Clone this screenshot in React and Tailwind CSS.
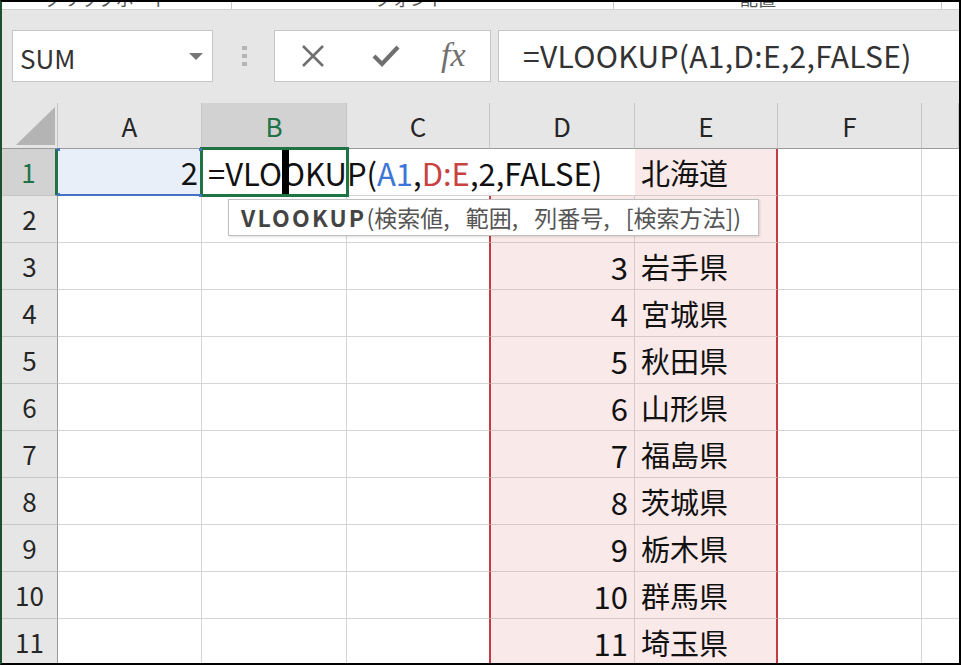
import React from 'react';

const font = { fontFamily: '"Noto Sans CJK JP", "Noto Sans", sans-serif' };

const prefs = ['北海道', '青森県', '岩手県', '宮城県', '秋田県', '山形県', '福島県', '茨城県', '栃木県', '群馬県', '埼玉県'];
const cols = ['A', 'B', 'C', 'D', 'E', 'F', ''];

function Toolbar() {
  return (
    <div className="h-[93px] bg-[#e6e6e6] flex items-start pt-[20px] pl-[10px]">
      {/* name box */}
      <div className="w-[201px] h-[52px] bg-white border border-[#c6c6c6] flex items-center pl-[7px] pr-[9px]">
        <span className="text-[26px] text-[#333] leading-none flex-1 mt-[3px]">SUM</span>
        <svg width="14" height="7" viewBox="0 0 14 7">
          <path d="M0 0 L14 0 L7 7 Z" fill="#777" />
        </svg>
      </div>
      {/* grip dots */}
      <div className="ml-[29px] mt-[16px] flex flex-col gap-[4px]">
        <div className="w-[5px] h-[4px] bg-[#b5b5b5]" />
        <div className="w-[5px] h-[4px] bg-[#b5b5b5]" />
        <div className="w-[5px] h-[4px] bg-[#b5b5b5]" />
      </div>
      {/* cancel / enter / fx */}
      <div className="ml-[27px] w-[217px] h-[52px] bg-white border border-[#c6c6c6] flex items-center">
        <svg className="ml-[26px]" width="24" height="22" viewBox="0 0 24 22">
          <path d="M2 1 L22 21 M22 1 L2 21" stroke="#707070" strokeWidth="2.6" fill="none" />
        </svg>
        <svg className="ml-[47px]" width="28" height="22" viewBox="0 0 28 22">
          <path d="M2 11 L10 19 L26 2" stroke="#707070" strokeWidth="4.2" fill="none" strokeLinejoin="miter" />
        </svg>
        <span
          className="ml-[41px] text-[34px] italic text-[#707070] leading-none -mt-[2px]"
          style={{ fontFamily: '"Liberation Serif", "DejaVu Serif", serif' }}
        >
          fx
        </span>
      </div>
      {/* formula bar */}
      <div className="ml-[7px] -mr-[2px] flex-1 h-[52px] bg-white border border-[#c6c6c6] flex items-center pl-[24px]">
        <span className="text-[30px] text-[#333] leading-none -mt-[3px] tracking-[0.3px]">=VLOOKUP(A1,D:E,2,FALSE)</span>
      </div>
    </div>
  );
}

function Grid() {
  const cells = [];

  // header row
  cells.push(
    <div key="corner" className="bg-[#e6e6e6] border-r border-b border-r-[#c6c6c6] border-b-[#9b9b9b] flex items-end justify-end pr-[2px] pb-[3px]">
      <svg width="39" height="38" viewBox="0 0 39 38">
        <path d="M0 38 L39 38 L39 0 Z" fill="#b4b4b4" />
      </svg>
    </div>
  );
  cols.forEach((c) => {
    const sel = c === 'B';
    cells.push(
      <div
        key={'h' + c}
        className={
          'border-r border-b border-r-[#c6c6c6] border-b-[#9b9b9b] flex items-center justify-center text-[26px] leading-none ' +
          (sel ? 'bg-[#d2d2d2] text-[#217346]' : 'bg-[#e6e6e6] text-[#262626]')
        }
      >
        {c}
      </div>
    );
  });

  for (let r = 1; r <= 11; r++) {
    const active = r === 1;
    cells.push(
      <div
        key={'r' + r}
        className={
          'border-b border-b-[#c6c6c6] flex items-center justify-center text-[26px] leading-none ' +
          (active
            ? 'bg-[#d2d2d2] text-[#217346] border-r-[3px] border-r-[#217346]'
            : 'bg-[#e6e6e6] text-[#262626] border-r border-r-[#9b9b9b]')
        }
      >
        {r}
      </div>
    );

    // A
    if (active) {
      cells.push(
        <div key={'a' + r} className="relative bg-[#e8eff9] border-b-2 border-b-[#4472c4] flex items-center justify-end pr-[4px] text-[31px] text-[#111] leading-none">
          2
          <div className="absolute -left-[1px] -top-[1px] w-[3px] h-[3px] bg-[#4472c4]" />
          <div className="absolute -left-[1px] -bottom-[2px] w-[3px] h-[3px] bg-[#4472c4]" />
        </div>
      );
    } else {
      cells.push(<div key={'a' + r} className="border-r border-b border-[#d4d4d4]" />);
    }

    // B
    if (active) {
      cells.push(
        <div key={'b' + r} className="relative border-r border-b border-[#d4d4d4]">
          <div className="absolute left-0 top-0 w-[433px] h-[46px] bg-white z-10 flex items-center pl-[6px] text-[31px] text-[#111] leading-none whitespace-nowrap">
            <span>=VLO</span>
            <div className="relative self-stretch w-0">
              <div className="absolute left-0 top-0 w-[7px] h-[47px] bg-black" />
            </div>
            <span>OKUP(</span>
            <span className="text-[#3e74d6]">A1</span>
            <span>,</span>
            <span className="text-[#c8423f]">D:E</span>
            <span>,2,FALSE)</span>
          </div>
          <div className="absolute -left-[2px] -top-[2px] w-[149px] h-[50px] border-[3px] border-[#217346] z-20" />
          <div className="absolute -left-[3px] -top-[1px] w-[3px] h-[3px] bg-[#4472c4] z-30" />
          <div className="absolute -left-[3px] -bottom-[2px] w-[3px] h-[3px] bg-[#4472c4] z-30" />
        </div>
      );
    } else {
      cells.push(<div key={'b' + r} className="border-r border-b border-[#d4d4d4]" />);
    }

    // C
    cells.push(
      <div
        key={'c' + r}
        className={'border-b border-b-[#d4d4d4] border-r ' + (active ? 'border-r-[#d4d4d4]' : 'border-r-[#c23b45]')}
      />
    );

    // D
    cells.push(
      <div
        key={'d' + r}
        className={
          'bg-[#f9e9e9] border-r border-b border-[#d6c9c9] flex items-center justify-end pr-[6px] text-[31px] text-[#111] leading-none ' +
          (active ? '' : 'border-l border-l-[#c23b45]')
        }
      >
        {r}
      </div>
    );

    // E
    cells.push(
      <div
        key={'e' + r}
        className="bg-[#f9e9e9] border-b border-b-[#d6c9c9] border-r-2 border-r-[#c23b45] flex items-center pl-[6px] text-[29px] text-[#111] leading-none"
      >
        {prefs[r - 1]}
      </div>
    );

    // F, G
    cells.push(<div key={'f' + r} className="border-r border-b border-[#d4d4d4]" />);
    cells.push(<div key={'g' + r} className="border-b border-[#d4d4d4]" />);
  }

  return (
    <div className="relative">
      <div className="grid grid-cols-[56px_144px_145px_143px_145px_143px_144px_1fr] grid-rows-[46px] auto-rows-[47px]">
        {cells}
      </div>
      {/* function tooltip */}
      <div className="absolute left-[226px] top-[96px] z-40 w-[531px] h-[37px] bg-white border border-[#bfbfbf] shadow-[1px_1px_2px_rgba(0,0,0,0.12)] flex items-center pl-[12px] text-[23px] text-[#555] leading-none whitespace-nowrap">
        <span className="font-bold text-[#444] tracking-[2.2px]">VLOOKUP</span>
        <span className="[word-spacing:11px]">(検索値, 範囲, 列番号, [検索方法])</span>
      </div>
    </div>
  );
}

export default function App() {
  return (
    <div
      className="w-[961px] h-[665px] overflow-hidden bg-white border-2 border-black border-l-[#1d4f33]"
      style={font}
    >
      {/* ribbon remnant */}
      <div className="h-[8px] border-b border-[#d0d0d0] bg-white relative overflow-hidden text-[18px] text-[#555] leading-none">
        <span className="absolute left-[42px] -top-[13px]">クリップボード</span>
        <div className="absolute left-[229px] top-0 h-full w-px bg-[#c8c8c8]" />
        <span className="absolute left-[372px] -top-[13px]">フォント</span>
        <div className="absolute left-[611px] top-0 h-full w-px bg-[#c8c8c8]" />
        <span className="absolute left-[738px] -top-[13px]">配置</span>
        <div className="absolute left-[939px] top-0 h-full w-px bg-[#c8c8c8]" />
      </div>
      <Toolbar />
      <Grid />
    </div>
  );
}
